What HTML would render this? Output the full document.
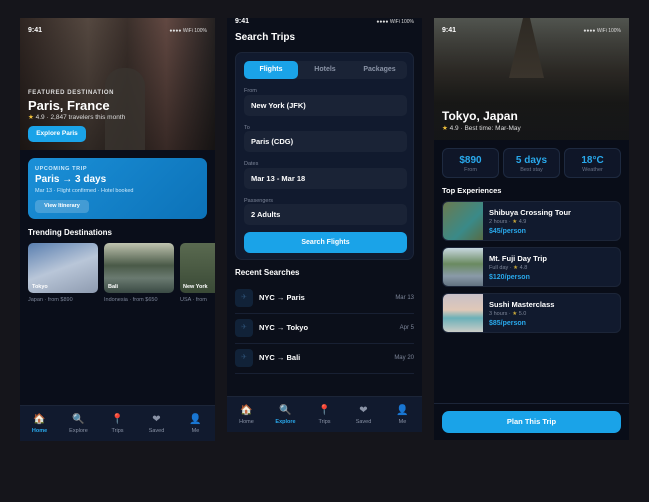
<!DOCTYPE html><html><head><meta charset="utf-8"><style>
*{margin:0;padding:0;box-sizing:border-box}
body{width:649px;height:502px;background:#15151b;font-family:"Liberation Sans",sans-serif;position:relative;overflow:hidden;color:#fff}
.ph{position:absolute;background:#0a0e1a;overflow:hidden}
.a{position:absolute}
.sb{position:absolute;top:9px;font-size:7px;font-weight:bold}
.sr{position:absolute;top:10px;right:8px;font-size:5px;color:#ddd}
.nav{position:absolute;left:0;right:0;bottom:0;height:36px;background:#111a2e;border-top:1px solid #1c2538}
.nav div{position:absolute;top:8px;width:39px;text-align:center;font-size:5.5px;color:#8a93a6}
.nav i{display:block;font-style:normal;font-size:10px;height:12px;margin-bottom:2px}
.fld{position:absolute;left:8px;width:163px;height:21px;background:#1a2336;border-radius:5px;font-size:7.5px;font-weight:bold;padding:7px 7px;line-height:8px}
.lb{position:absolute;left:8px;font-size:5.5px;color:#7c8598}
.row{position:absolute;left:8px;width:179px;height:30px;border-bottom:1px solid #182033}
.row .ic{position:absolute;left:0;top:5px;width:18px;height:18px;border-radius:4px;background:#112238;color:#2a4d70;font-size:7px;text-align:center;line-height:18px}
.row b{position:absolute;left:24px;top:10px;font-size:7.5px;line-height:8px}
.row span{position:absolute;right:0;top:11px;font-size:6px;color:#7c8598;line-height:7px}
.st{position:absolute;top:130px;width:57px;height:30px;border:1px solid #1e2a40;background:#0f1628;border-radius:6px;text-align:center}
.st b{display:block;color:#29a9ec;font-size:10px;line-height:11px;margin-top:6px}
.st span{display:block;font-size:5.5px;line-height:7px;color:#6b7488;margin-top:1px}
.ex{position:absolute;left:8px;width:179px;height:40px;background:#111a2e;border:1px solid #1c2538;border-radius:6px;overflow:hidden}
.ex .im{position:absolute;left:0;top:0;width:40px;height:40px}
.ex b{position:absolute;left:46px;top:6px;font-size:7.5px}
.ex span{position:absolute;left:46px;top:17px;font-size:5.5px;color:#7c8598}
.ex em{position:absolute;left:46px;top:26px;font-size:7px;color:#29a9ec;font-style:normal;font-weight:bold}
</style></head><body>

<!-- Phone 1 -->
<div class="ph" style="left:20px;top:18px;width:195px;height:423px">
 <div class="a" style="left:0;top:0;width:195px;height:132px;background:linear-gradient(180deg,rgba(0,0,0,.2),rgba(0,0,0,.55)),linear-gradient(90deg,#3a2e2a 0%,#6a5a50 35%,#4a3c36 55%,#7a5a52 75%,#2e2a2a 100%)"></div>
 <div class="a" style="left:85px;top:50px;width:40px;height:82px;background:#3a3430;border-radius:18px 18px 0 0;opacity:.8"></div>
 <div class="sb" style="left:8px">9:41</div><div class="sr">●●●● WiFi 100%</div>
 <div class="a" style="left:8px;top:72px;font-size:6px;letter-spacing:.6px;font-weight:bold;color:#ddd">FEATURED DESTINATION</div>
 <div class="a" style="left:8px;top:80px;font-size:13px;font-weight:bold">Paris, France</div>
 <div class="a" style="left:8px;top:95px;font-size:6.5px;color:#ddd"><span style="color:#f3c33c">★</span> 4.9 · 2,847 travelers this month</div>
 <div class="a" style="left:8px;top:108px;width:58px;height:16px;background:#1aa3e8;border-radius:5px;font-size:6.5px;font-weight:bold;text-align:center;line-height:16px">Explore Paris</div>
 <div class="a" style="left:8px;top:140px;width:179px;height:61px;border-radius:7px;background:linear-gradient(135deg,#1b90d8,#0c72b8)">
  <div class="a" style="left:7px;top:8px;font-size:5.5px;font-weight:bold;letter-spacing:.6px;color:#cde9fb">UPCOMING TRIP</div>
  <div class="a" style="left:7px;top:16px;font-size:10px;font-weight:bold">Paris → 3 days</div>
  <div class="a" style="left:7px;top:30px;font-size:5.5px;color:#cde9fb">Mar 13 · Flight confirmed · Hotel booked</div>
  <div class="a" style="left:7px;top:42px;width:54px;height:13px;background:rgba(255,255,255,.2);border-radius:4px;font-size:5.5px;font-weight:bold;text-align:center;line-height:13px">View Itinerary</div>
 </div>
 <div class="a" style="left:8px;top:210px;font-size:8px;font-weight:bold">Trending Destinations</div>
 <div class="a" style="left:8px;top:225px;width:70px;height:50px;border-radius:5px;background:linear-gradient(160deg,#5a7fb0,#b9c6d8 50%,#8e9bb0)"><span class="a" style="left:4px;bottom:3px;font-size:5.5px;font-weight:bold">Tokyo</span></div>
 <div class="a" style="left:84px;top:225px;width:70px;height:50px;border-radius:5px;background:linear-gradient(180deg,#c0c4b0,#4a5a48 45%,#6a7a70 70%,#3a4a44)"><span class="a" style="left:4px;bottom:3px;font-size:5.5px;font-weight:bold">Bali</span></div>
 <div class="a" style="left:160px;top:225px;width:35px;height:50px;border-radius:5px 0 0 5px;background:linear-gradient(180deg,#5a6a50,#3a4a36)"><span class="a" style="left:3px;bottom:3px;font-size:5.5px;font-weight:bold;white-space:nowrap">New York</span></div>
 <div class="a" style="left:8px;top:279px;font-size:5.5px;color:#7c8598;white-space:nowrap">Japan · from $890</div>
 <div class="a" style="left:84px;top:279px;font-size:5.5px;color:#7c8598;white-space:nowrap">Indonesia · from $650</div>
 <div class="a" style="left:160px;top:279px;font-size:5.5px;color:#7c8598;white-space:nowrap">USA · from</div>
 <div class="nav"><div style="left:0"><i>🏠</i><span style="color:#29a9ec;font-weight:bold">Home</span></div><div style="left:39px"><i>🔍</i>Explore</div><div style="left:78px"><i>📍</i>Trips</div><div style="left:117px"><i>❤</i>Saved</div><div style="left:156px"><i>👤</i>Me</div></div>
</div>

<!-- Phone 2 -->
<div class="ph" style="left:227px;top:18px;width:195px;height:414px;background:#0b0f1a">
 <div class="sb" style="left:8px;top:0">9:41</div><div class="sr" style="top:1px">●●●● WiFi 100%</div>
 <div class="a" style="left:8px;top:14px;font-size:10px;font-weight:bold;line-height:12px">Search Trips</div>
 <div class="a" style="left:8px;top:34px;width:179px;height:208px;background:#111a2e;border:1px solid #1c2538;border-radius:7px">
  <div class="a" style="left:8px;top:8px;width:163px;height:18px;background:#1a2336;border-radius:5px"></div>
  <div class="a" style="left:8px;top:8px;width:54px;height:18px;background:#1aa3e8;border-radius:5px;font-size:7px;font-weight:bold;text-align:center;line-height:18px">Flights</div>
  <div class="a" style="left:62px;top:8px;width:54px;font-size:7px;font-weight:bold;text-align:center;line-height:18px;color:#8a93a6">Hotels</div>
  <div class="a" style="left:116px;top:8px;width:55px;font-size:7px;font-weight:bold;text-align:center;line-height:18px;color:#8a93a6">Packages</div>
  <div class="lb" style="top:35px">From</div><div class="fld" style="top:42px">New York (JFK)</div>
  <div class="lb" style="top:72px">To</div><div class="fld" style="top:78px">Paris (CDG)</div>
  <div class="lb" style="top:108px">Dates</div><div class="fld" style="top:115px">Mar 13 - Mar 18</div>
  <div class="lb" style="top:145px">Passengers</div><div class="fld" style="top:151px">2 Adults</div>
  <div class="a" style="left:8px;top:179px;width:163px;height:21px;background:#1aa3e8;border-radius:6px;font-size:7px;font-weight:bold;text-align:center;line-height:21px">Search Flights</div>
 </div>
 <div class="a" style="left:8px;top:250px;font-size:8px;font-weight:bold">Recent Searches</div>
 <div class="row" style="top:266px"><div class="ic">✈</div><b>NYC → Paris</b><span>Mar 13</span></div>
 <div class="row" style="top:296px"><div class="ic">✈</div><b>NYC → Tokyo</b><span>Apr 5</span></div>
 <div class="row" style="top:326px"><div class="ic">✈</div><b>NYC → Bali</b><span>May 20</span></div>
 <div class="nav"><div style="left:0"><i>🏠</i>Home</div><div style="left:39px"><i>🔍</i><span style="color:#29a9ec;font-weight:bold">Explore</span></div><div style="left:78px"><i>📍</i>Trips</div><div style="left:117px"><i>❤</i>Saved</div><div style="left:156px"><i>👤</i>Me</div></div>
</div>

<!-- Phone 3 -->
<div class="ph" style="left:434px;top:18px;width:195px;height:422px;background:#090d18">
 <div class="a" style="left:0;top:0;width:195px;height:122px;background:linear-gradient(180deg,rgba(0,0,0,.1),rgba(0,0,0,.6)),linear-gradient(180deg,#5a5e58 0%,#3e3a34 45%,#2a2a28 70%,#33363a 100%)"></div>
 <div class="a" style="left:75px;top:0;width:35px;height:60px;background:linear-gradient(180deg,#2e2a24,#3a342c);clip-path:polygon(40% 0,60% 0,100% 100%,0 100%)"></div>
 <div class="sb" style="left:8px">9:41</div><div class="sr">●●●● WiFi 100%</div>
 <div class="a" style="left:8px;top:91px;font-size:12px;font-weight:bold">Tokyo, Japan</div>
 <div class="a" style="left:8px;top:106px;font-size:6.5px;color:#ddd"><span style="color:#f3c33c">★</span> 4.9 · Best time: Mar-May</div>
 <div class="st" style="left:8px"><b>$890</b><span>From</span></div>
 <div class="st" style="left:69px"><b>5 days</b><span>Best stay</span></div>
 <div class="st" style="left:130px"><b>18°C</b><span>Weather</span></div>
 <div class="a" style="left:8px;top:168px;font-size:7.5px;font-weight:bold">Top Experiences</div>
 <div class="ex" style="top:183px"><div class="im" style="background:linear-gradient(135deg,#6a7a50,#3a8a88 60%,#5a6a40)"></div><b>Shibuya Crossing Tour</b><span>2 hours · <span style="position:static;color:#c9a83a">★</span> 4.9</span><em>$45/person</em></div>
 <div class="ex" style="top:229px"><div class="im" style="background:linear-gradient(180deg,#c8d8e0,#6a8a60 40%,#8a9aa8 70%,#5a6a78)"></div><b>Mt. Fuji Day Trip</b><span>Full day · <span style="position:static;color:#c9a83a">★</span> 4.8</span><em>$120/person</em></div>
 <div class="ex" style="top:275px"><div class="im" style="background:linear-gradient(180deg,#c8c0c8,#e0c8b8 40%,#6ab0b8 60%,#d8d0c8)"></div><b>Sushi Masterclass</b><span>3 hours · <span style="position:static;color:#c9a83a">★</span> 5.0</span><em>$85/person</em></div>
 <div class="a" style="left:0;top:385px;width:195px;height:1px;background:#1c2538"></div>
 <div class="a" style="left:8px;top:393px;width:179px;height:22px;background:#1aa3e8;border-radius:7px;font-size:7.5px;font-weight:bold;text-align:center;line-height:22px">Plan This Trip</div>
</div>
</body></html>
